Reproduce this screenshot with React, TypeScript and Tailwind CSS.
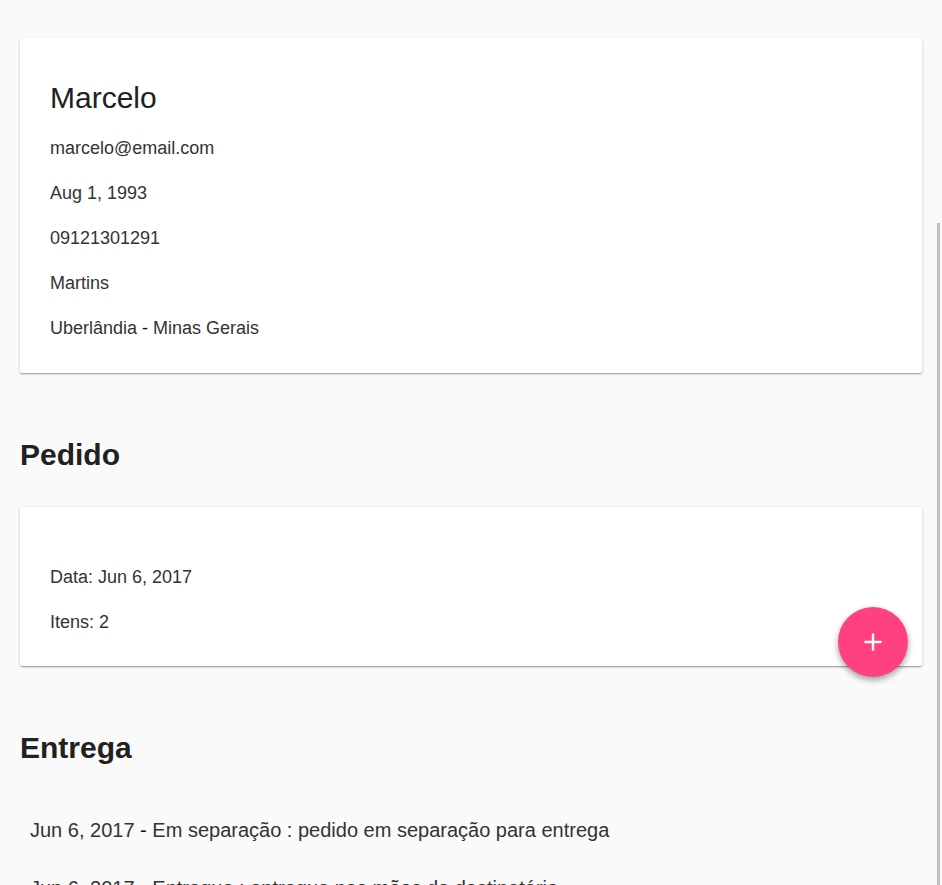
import { Plus } from "lucide-react";

const CLIENT = {
  name: "Marcelo",
  lines: [
    "marcelo@email.com",
    "Aug 1, 1993",
    "09121301291",
    "Martins",
  ],
  city: "Uberlândia",
  state: "Minas Gerais",
};

const ENTREGAS = [
  "Em separação : pedido em separação para entrega",
  "Entregue : entregue nas mãos do destinatário",
];

const CARD =
  "rounded-[2px] bg-white shadow-[0_1px_3px_rgba(0,0,0,0.2),0_1px_1px_rgba(0,0,0,0.14),0_2px_1px_-1px_rgba(0,0,0,0.12)]";

export default function App() {
  return (
    <div
      className="min-h-screen bg-[#fafafa] px-5 pt-[38px] text-[#333333]"
      style={{ fontFamily: '"Liberation Sans", Arial, sans-serif' }}
    >
      {/* Cliente */}
      <div className={`${CARD} px-[30px] pt-[42px] pb-[22px]`}>
        <p className="text-[30px] leading-[36px] text-[#212121]">{CLIENT.name}</p>
        <div className="mt-[10px] text-[18px] leading-[45px]">
          {CLIENT.lines.map((l) => (
            <p key={l}>{l}</p>
          ))}
          <p>
            {CLIENT.city}
            <span className="text-[#111111]"> - </span>
            {CLIENT.state}
          </p>
        </div>
      </div>

      {/* Pedido */}
      <h2 className="mt-16 text-[30px] font-bold leading-[36px] text-[#212121]">Pedido</h2>
      <div className={`${CARD} relative mt-[34px] px-[30px] pt-[48px] pb-[21px] text-[18px] leading-[45px]`}>
        <p>Data: Jun 6, 2017</p>
        <p>Itens: 2</p>
        <button
          type="button"
          className="absolute right-[14px] top-[100px] flex h-[70px] w-[70px] items-center justify-center rounded-full bg-[#ff4081] text-white shadow-[0_3px_6px_rgba(0,0,0,0.16),0_3px_6px_rgba(0,0,0,0.23)]"
        >
          <Plus className="h-[26px] w-[26px]" strokeWidth={2.2} />
        </button>
      </div>

      {/* Entrega */}
      <h2 className="mt-16 text-[30px] font-bold leading-[36px] text-[#212121]">Entrega</h2>
      <ul className="mt-[49px] pl-[10px] text-[20px] leading-[30px]">
        {ENTREGAS.map((e) => (
          <li key={e} className="mb-[28px]">
            Jun 6, 2017 <span className="text-[#111111]">-</span> {e}
          </li>
        ))}
      </ul>

      {/* scrollbar thumb */}
      <div className="fixed right-[2px] top-[223px] bottom-0 w-[3px] bg-[#c1c1c1]" />
    </div>
  );
}
